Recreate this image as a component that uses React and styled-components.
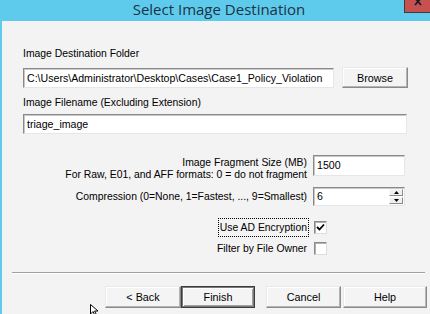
import React from 'react'
import styled, { createGlobalStyle } from 'styled-components'

const GlobalStyle = createGlobalStyle`
  html, body {
    margin: 0;
    padding: 0;
    background: #f3f3f3;
  }
  body {
    font-family: 'Liberation Sans', Arial, sans-serif;
  }
`

const Window = styled.div`
  position: relative;
  width: 430px;
  height: 314px;
  overflow: hidden;
  background: #f3f3f3;
  border-left: 2px solid #5fcbec;
  box-sizing: border-box;
  display: flex;
  flex-direction: column;
`

const TitleBar = styled.div`
  height: 21px;
  flex: 0 0 21px;
  background: #5fcbec;
  display: flex;
  justify-content: center;
  align-items: center;
  position: relative;
`

const Title = styled.div`
  font-family: 'Open Sans', 'Noto Sans', sans-serif;
  font-size: 15px;
  color: #1b3445;
  margin-left: 6px;
  margin-top: -3px;
`

const CloseButton = styled.div`
  position: absolute;
  top: 0;
  right: 0;
  width: 25px;
  height: 12px;
  overflow: hidden;
  background: #c75050;
  border-left: 1px solid #3c3c3c;
  border-bottom: 1px solid #3c3c3c;
  display: flex;
  justify-content: center;
`

const Body = styled.div`
  flex: 1;
  padding: 26px 0 0 21px;
  display: flex;
  flex-direction: column;
  font-size: 10.4px;
  color: #000;
`

const Label = styled.div`
  height: 13px;
  line-height: 13px;
  margin-top: ${p => p.mt || 0}px;
`

const Row = styled.div`
  display: flex;
  align-items: center;
  margin-top: ${p => p.mt || 0}px;
`

const TextBox = styled.div`
  position: relative;
  box-sizing: border-box;
  width: ${p => p.w}px;
  height: ${p => p.h || 20}px;
  align-self: ${p => (p.top ? 'start' : 'auto')};
  background: #fff;
  border: 1px solid;
  border-color: #8a8a8a #e6e6e6 #e6e6e6 #8a8a8a;
  box-shadow: inset 1px 1px 0 #c8c8c8;
  padding: 0 0 0 3px;
  line-height: ${p => (p.h || 20) - 2}px;
  font-size: 10.6px;
  white-space: nowrap;
  overflow: hidden;
`

const Button = styled.div`
  box-sizing: border-box;
  width: ${p => p.w}px;
  height: ${p => p.h || 22}px;
  margin-left: ${p => p.ml || 0}px;
  background: #f4f4f4;
  border: 1px solid;
  border-color: ${p => (p.primary ? '#3c3c3c' : '#e8e8e8 #8a8a8a #8a8a8a #e8e8e8')};
  box-shadow: ${p => (p.primary
    ? 'inset 1px 1px 0 #7a7a7a, inset -1px -1px 0 #7a7a7a, inset 2px 2px 0 #fff, inset -2px -2px 0 #a0a0a0'
    : 'inset -1px -1px 0 #b4b4b4, inset 1px 1px 0 #fff')};
  display: flex;
  align-items: center;
  justify-content: center;
  font-size: 10.8px;
`

const Options = styled.div`
  display: grid;
  grid-template-columns: 284px 92px;
  column-gap: 6px;
  align-items: center;
  margin-top: ${p => p.mt || 0}px;
`

const RightLabel = styled.div`
  text-align: right;
  line-height: 12px;
  margin-top: ${p => p.mt || 0}px;
`

const Spinner = styled.div`
  position: absolute;
  right: 1px;
  top: 1px;
  width: 14px;
  display: flex;
  flex-direction: column;
  gap: 1px;
`

const SpinButton = styled.div`
  height: 7px;
  box-sizing: border-box;
  background: #f0f0f0;
  border: 1px solid;
  border-color: #fafafa #8a8a8a #8a8a8a #fafafa;
  display: flex;
  align-items: center;
  justify-content: center;
`

const CheckRow = styled.div`
  display: flex;
  justify-content: flex-end;
  align-items: center;
  width: 304px;
  margin-top: ${p => p.mt || 0}px;
`

const CheckLabel = styled.div`
  box-sizing: border-box;
  padding: 2px 1px;
  border: 1px dotted ${p => (p.focused ? '#000' : 'transparent')};
  line-height: 13px;
  margin-right: 5px;
`

const Box = styled.div`
  box-sizing: border-box;
  width: 13px;
  height: 13px;
  background: #fff;
  border: 1px solid;
  border-color: #8a8a8a #dcdcdc #dcdcdc #8a8a8a;
  box-shadow: inset 1px 1px 0 #b0b0b0;
  display: flex;
  align-items: center;
  justify-content: center;
`

const Separator = styled.div`
  height: 1px;
  width: 413px;
  margin: 14px 0 0 -11px;
  background: #a0a0a0;
  border-bottom: 1px solid #fff;
`

const ButtonRow = styled.div`
  display: flex;
  margin: 12px 0 0 82px;
`

const Cursor = styled.svg`
  position: absolute;
  left: 88px;
  top: 304px;
`

const Arrow = ({ up }) => (
  <svg width="5" height="3" viewBox="0 0 5 3">
    <path d={up ? 'M2.5 0 L5 3 L0 3 Z' : 'M0 0 L5 0 L2.5 3 Z'} fill="#000" />
  </svg>
)

const App = () => (
  <Window>
    <GlobalStyle />
    <TitleBar>
      <Title>Select Image Destination</Title>
      <CloseButton>
        <svg width="8" height="6" viewBox="0 0 8 6">
          <path d="M1 -2 L7 5 M7 -2 L1 5" stroke="#1e1e1e" strokeWidth="1.8" />
        </svg>
      </CloseButton>
    </TitleBar>
    <Body>
      <Label>Image Destination Folder</Label>
      <Row mt={7}>
        <TextBox w={311}>C:\Users\Administrator\Desktop\Cases\Case1_Policy_Violation</TextBox>
        <Button w={66} h={21} ml={8}>Browse</Button>
      </Row>
      <Label mt={8}>Image Filename (Excluding Extension)</Label>
      <Row mt={5}>
        <TextBox w={384}>triage_image</TextBox>
      </Row>
      <Options mt={21}>
        <RightLabel mt={2}>
          Image Fragment Size (MB)
          <br />
          For Raw, E01, and AFF formats: 0 = do not fragment
        </RightLabel>
        <TextBox w={92} h={21} top>1500</TextBox>
      </Options>
      <Options mt={6}>
        <RightLabel>Compression (0=None, 1=Fastest, ..., 9=Smallest)</RightLabel>
        <TextBox w={92} h={19}>
          6
          <Spinner>
            <SpinButton><Arrow up /></SpinButton>
            <SpinButton><Arrow /></SpinButton>
          </Spinner>
        </TextBox>
      </Options>
      <CheckRow mt={12}>
        <CheckLabel focused>Use AD Encryption</CheckLabel>
        <Box>
          <svg width="9" height="9" viewBox="0 0 9 9">
            <path d="M1 4 L3.5 6.5 L8 1.5" stroke="#000" strokeWidth="1.8" fill="none" />
          </svg>
        </Box>
      </CheckRow>
      <CheckRow mt={2}>
        <CheckLabel>Filter by File Owner</CheckLabel>
        <Box />
      </CheckRow>
      <Separator />
      <ButtonRow>
        <Button w={76}>&lt; Back</Button>
        <Button w={74} primary>Finish</Button>
        <Button w={75} ml={11}>Cancel</Button>
        <Button w={84} ml={2}>Help</Button>
      </ButtonRow>
    </Body>
    <Cursor width="10" height="12" viewBox="0 0 10 12">
      <path d="M0.5 0.5 L0.5 10 L3 7.5 L5 11.5 L6.5 10.8 L4.6 7 L8 7 Z" fill="#fff" stroke="#000" strokeWidth="1" />
    </Cursor>
  </Window>
)

export default App
